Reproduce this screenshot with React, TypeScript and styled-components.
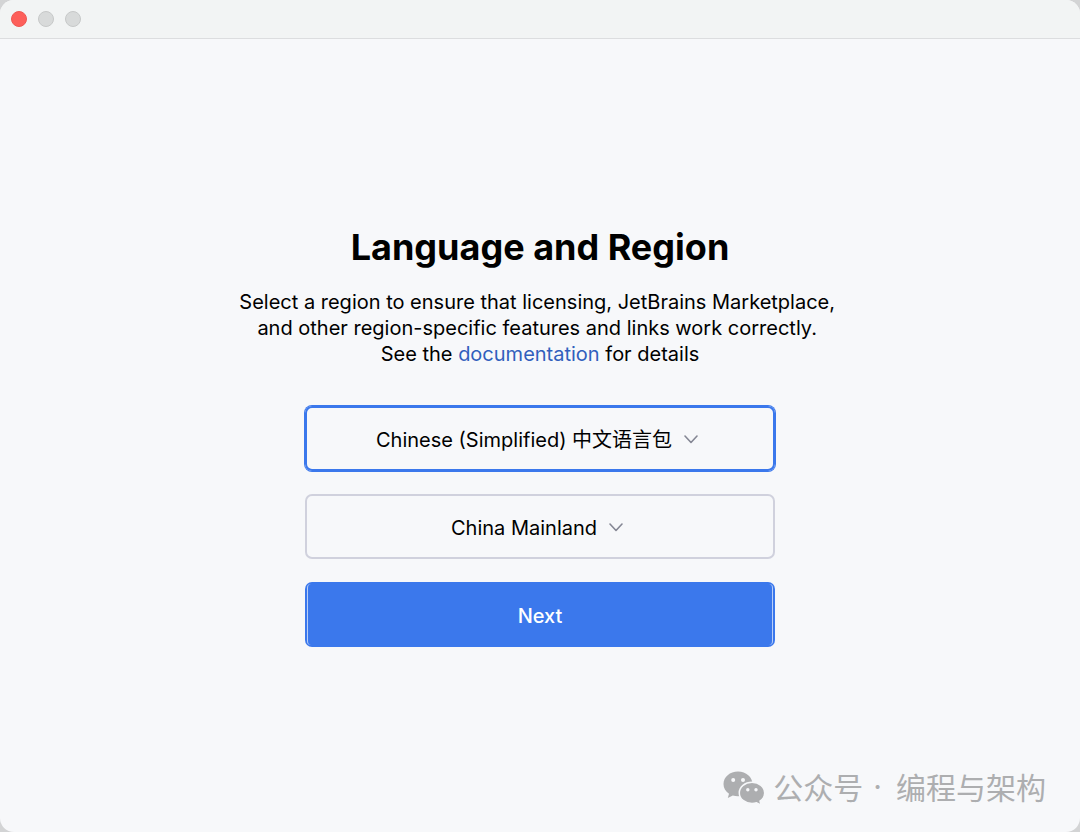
import React from "react";
import styled, { createGlobalStyle } from "styled-components";

const GlobalStyle = createGlobalStyle`
  *, *::before, *::after { box-sizing: border-box; }
  body {
    margin: 0;
    background: #d3d4d5;
    color: #000;
    font-family: Inter, "Noto Sans CJK SC", sans-serif;
    font-size: 20px;
    line-height: 26px;
  }
`;

const Window = styled.div`
  position: relative;
  display: flex;
  flex-direction: column;
  min-height: 100vh;
  border-radius: 14px;
  overflow: hidden;
  background: #f7f8fa;
`;

const TitleBar = styled.header`
  display: flex;
  align-items: center;
  gap: 11px;
  height: 39px;
  padding: 0 11px;
  background: #f2f4f4;
  border-bottom: 1px solid #dcdddf;
`;

const WindowButton = styled.button<{ $fill: string; $edge: string }>`
  width: 16px;
  height: 16px;
  padding: 0;
  border: 1px solid ${(p) => p.$edge};
  border-radius: 50%;
  background: ${(p) => p.$fill};
`;

const Content = styled.main`
  flex: 1;
  display: flex;
  flex-direction: column;
  align-items: center;
  justify-content: center;
  padding: 24px;
`;

const Title = styled.h1`
  margin: 0 0 20px;
  font-size: 36px;
  line-height: 44px;
  font-weight: 700;
`;

const Description = styled.p`
  margin: 0 0 39px;
  text-align: center;
  white-space: pre;
`;

const DocLink = styled.a`
  color: #315fbd;
  text-decoration: none;
`;

const Form = styled.form`
  display: flex;
  flex-direction: column;
  gap: 23px;
  width: 100%;
  max-width: 470px;
`;

const Field = styled.label<{ $active?: boolean }>`
  display: flex;
  align-items: center;
  justify-content: center;
  gap: 12px;
  height: 65px;
  padding: 3px 6px 0 0;
  border: 2px solid ${(p) => (p.$active ? "#3b78ec" : "#d0d1dd")};
  border-radius: 7px;
  box-shadow: ${(p) => (p.$active ? "0 0 0 1px #3b78ec" : "none")};
`;

const Select = styled.select`
  appearance: none;
  field-sizing: content;
  padding: 0;
  border: 0;
  outline: 0;
  background: transparent;
  color: inherit;
  font: inherit;
`;

const NextButton = styled.button`
  display: flex;
  height: 65px;
  padding: 2px;
  border: 0;
  border-radius: 7px;
  background: #3b78ec;
  color: #fff;
  font: inherit;
  font-weight: 500;
`;

const NextFace = styled.span`
  flex: 1;
  display: flex;
  align-items: center;
  justify-content: center;
  align-self: stretch;
  padding-top: 3px;
  border: solid #b9cff8;
  border-width: 0 1px;
  border-radius: 4px;
`;

const Watermark = styled.div`
  position: absolute;
  right: 34px;
  bottom: 24px;
  display: flex;
  align-items: center;
  color: #adaeb0;
  font-family: "Noto Sans CJK SC", sans-serif;
  font-size: 30px;
  line-height: 44px;
`;

const Dot = styled.span`
  margin: 0 14px 0 10px;
  font-family: Inter, sans-serif;
`;

const Logo = styled.svg`
  margin: 4px 8px 0 0;
`;

const Chevron = () => (
  <svg width="14" height="10" viewBox="0 0 14 10" fill="none" aria-hidden="true">
    <path d="M1 1 7 7.5 13 1" stroke="#858794" strokeWidth="1.6" strokeLinecap="round" strokeLinejoin="round" />
  </svg>
);

const ChatLogo = () => (
  <Logo width="42" height="34" viewBox="0 0 42 34" aria-hidden="true">
    <path
      fill="#adaeb0"
      d="M15 .5C6.900.5.5 6 .5 13c0 4 2 7.500 5.500 9.800L4.800 27l5-2.500c1.700.5 3.400.8 5.200.8C23.200 25.300 29.500 19.800 29.500 13S23.200.5 15 .5Z"
    />
    <path
      fill="#adaeb0"
      stroke="#f7f8fa"
      strokeWidth="1.500"
      d="M29 11.300c-7.100 0-12.700 4.700-12.700 10.600S21.900 32.500 29 32.500c1.600 0 3.100-.2 4.500-.7l4.700 2.300-1.200-4c2.900-2 4.700-4.900 4.700-8.200 0-5.900-5.600-10.600-12.700-10.600Z"
    />
    <g fill="#f7f8fa">
      <circle cx="10.200" cy="9" r="2" />
      <circle cx="20" cy="9" r="2" />
      <circle cx="24.800" cy="18.800" r="1.700" />
      <circle cx="33" cy="18.800" r="1.700" />
    </g>
  </Logo>
);

export default function App() {
  return (
    <>
      <GlobalStyle />
      <Window>
        <TitleBar>
          <WindowButton type="button" aria-label="Close" $fill="#fd5f5a" $edge="#ee5752" />
          <WindowButton type="button" aria-label="Minimize" $fill="#d8dada" $edge="#c6c8c8" />
          <WindowButton type="button" aria-label="Zoom" $fill="#d8dada" $edge="#c6c8c8" />
        </TitleBar>
        <Content>
          <Title>Language and Region</Title>
          <Description>
            {"Select a region to ensure that licensing, JetBrains Marketplace, \n"}
            {"and other region-specific features and links work correctly. \n"}
            {"See the "}
            <DocLink href="#documentation">documentation</DocLink>
            {" for details"}
          </Description>
          <Form onSubmit={(e) => e.preventDefault()}>
            <Field $active>
              <Select aria-label="Language" defaultValue="zh">
                <option value="zh">Chinese (Simplified) 中文语言包</option>
              </Select>
              <Chevron />
            </Field>
            <Field>
              <Select aria-label="Region" defaultValue="cn">
                <option value="cn">China Mainland</option>
              </Select>
              <Chevron />
            </Field>
            <NextButton type="submit">
              <NextFace>Next</NextFace>
            </NextButton>
          </Form>
        </Content>
        <Watermark>
          <ChatLogo />
          <span>公众号</span>
          <Dot>·</Dot>
          <span>编程与架构</span>
        </Watermark>
      </Window>
    </>
  );
}
